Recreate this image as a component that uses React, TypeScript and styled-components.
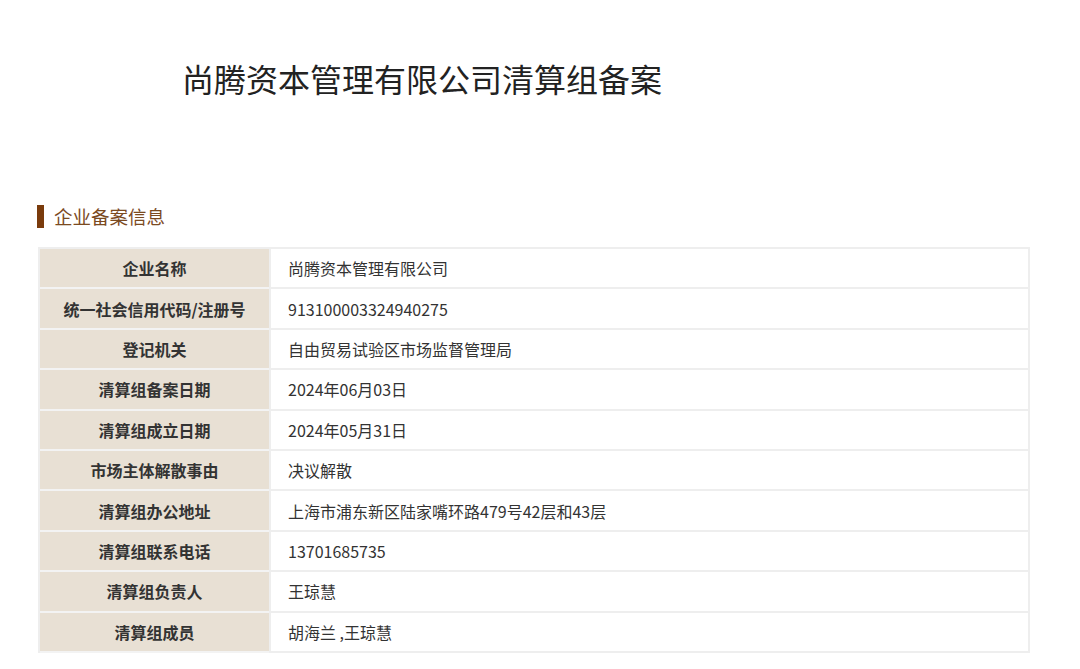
import React from "react";
import styled, { createGlobalStyle } from "styled-components";

const G = createGlobalStyle`
  body { margin: 0; background: #fff; font-family: "Noto Sans CJK SC", "Noto Sans", sans-serif; }
`;
const Page = styled.div`padding: 56px 50px 0 37px;`;
const Title = styled.h1`
  margin: 0 0 0 145px; font-size: 32px; font-weight: 400; color: #222; line-height: 44px;
`;
const Section = styled.div`
  margin-top: 104px; display: flex; align-items: center; gap: 10px;
  font-size: 18.5px; color: #7b4a1f; line-height: 24px;
`;
const Bar = styled.span`width: 7px; height: 23px; background: #7a3b0c;`;
const Table = styled.div`
  margin: 19px 0 0 1px; border: 2px solid #eeeeee; border-bottom: 0;
  display: grid; grid-template-columns: 229px 1fr;
`;
const Label = styled.div`
  background: #e8e0d4; height: 38.4px; border-bottom: 2px solid #f3f3f3;
  display: flex; align-items: center; justify-content: center;
  font-size: 16px; font-weight: 700; color: #333;
`;
const Value = styled.div`
  height: 38.4px; border-bottom: 2px solid #eeeeee; border-left: 2px solid #eeeeee;
  display: flex; align-items: center; padding-left: 17px;
  font-size: 16px; color: #333;
`;
const rows = [
  ["企业名称", "尚腾资本管理有限公司"],
  ["统一社会信用代码/注册号", "913100003324940275"],
  ["登记机关", "自由贸易试验区市场监督管理局"],
  ["清算组备案日期", "2024年06月03日"],
  ["清算组成立日期", "2024年05月31日"],
  ["市场主体解散事由", "决议解散"],
  ["清算组办公地址", "上海市浦东新区陆家嘴环路479号42层和43层"],
  ["清算组联系电话", "13701685735"],
  ["清算组负责人", "王琼慧"],
  ["清算组成员", "胡海兰 ,王琼慧"],
];
export default function App() {
  return (
    <Page>
      <G />
      <Title>尚腾资本管理有限公司清算组备案</Title>
      <Section><Bar />企业备案信息</Section>
      <Table>
        {rows.map(([l, v]) => (
          <React.Fragment key={l}>
            <Label>{l}</Label>
            <Value>{v}</Value>
          </React.Fragment>
        ))}
      </Table>
    </Page>
  );
}
